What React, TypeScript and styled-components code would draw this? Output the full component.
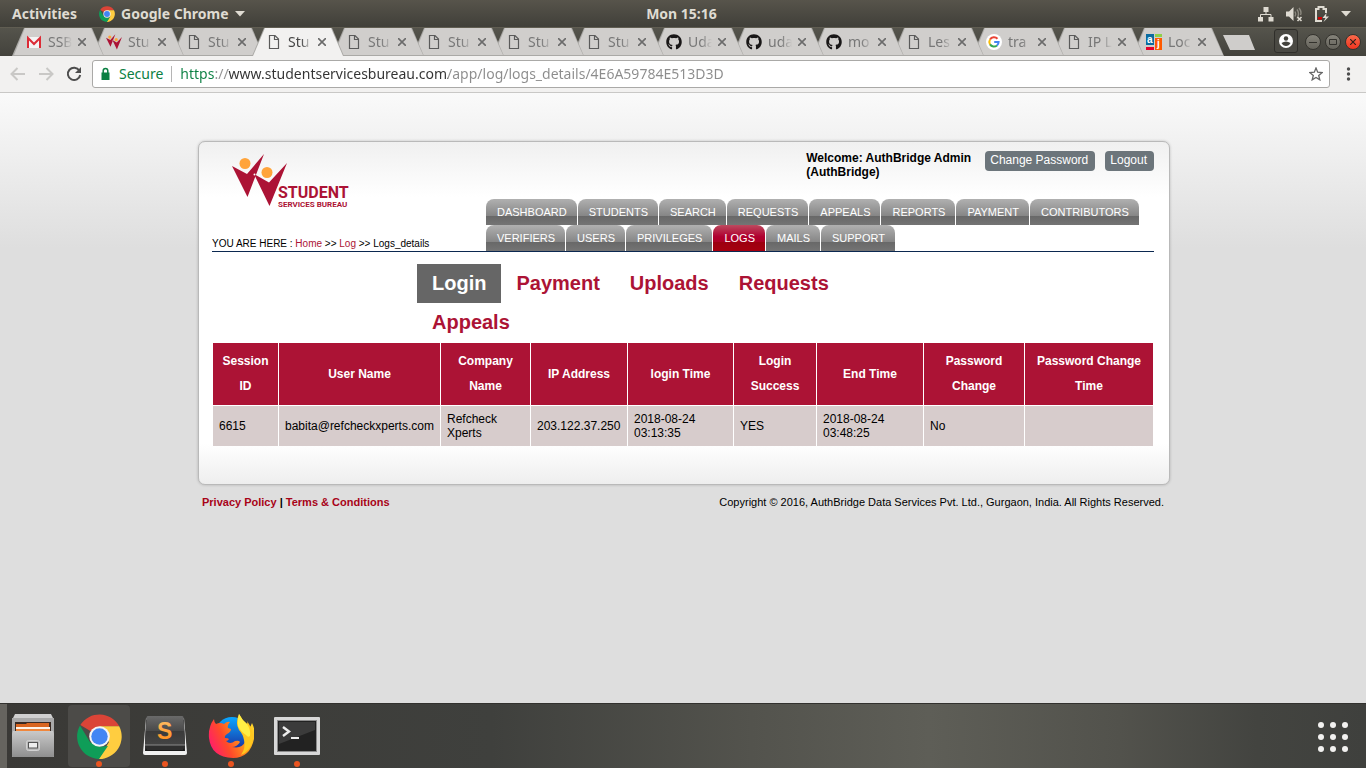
import React from "react";
import styled, { createGlobalStyle, css } from "styled-components";
import { FaGithub } from "react-icons/fa";

const UI = `"Noto Sans", "Open Sans", sans-serif`;
const WEB = `"Liberation Sans", Arial, sans-serif`;
const RED = "#ac1335";

const Global = createGlobalStyle`
  *, *::before, *::after { box-sizing: border-box; }
  html, body { margin: 0; padding: 0; }
  body { background: #dedede; font-family: ${WEB}; }
  button { font: inherit; border: 0; padding: 0; background: none; color: inherit; cursor: pointer; }
  ul { list-style: none; margin: 0; padding: 0; }
  a { color: inherit; text-decoration: none; }
  svg { display: block; flex: none; }
`;

const Desktop = styled.div`
  min-height: 100vh;
  display: flex;
  flex-direction: column;
`;

/* ---------- system bar ---------- */

const SystemBar = styled.header`
  display: grid;
  grid-template-columns: 1fr auto 1fr;
  align-items: center;
  height: 27px;
  padding: 0 15px 0 12px;
  background: linear-gradient(#57544b, #403f39);
  color: #dfdbd2;
  font: bold 14px/26px ${UI};
`;

const SystemGroup = styled.div<{ $end?: boolean }>`
  display: flex;
  align-items: center;
  gap: ${(p) => (p.$end ? 11 : 22)}px;
  justify-content: ${(p) => (p.$end ? "flex-end" : "flex-start")};
`;

const SystemButton = styled.button`
  display: flex;
  align-items: center;
  gap: 6px;
`;

/* ---------- tab strip ---------- */

const TabStrip = styled.nav`
  display: flex;
  align-items: flex-end;
  height: 29px;
  padding: 0 5px 0 12px;
  background: linear-gradient(#55544c, #43423c);
  border-top: 1px solid #605d52;
  overflow: hidden;
`;

const Tabs = styled.ul`
  display: flex;
  isolation: isolate;
`;

const Tab = styled.li<{ $active: boolean; $order: number }>`
  position: relative;
  display: flex;
  align-items: center;
  width: 92px;
  height: 28px;
  padding: 0 18px 0 14px;
  margin-right: -12px;
  z-index: ${(p) => (p.$active ? 50 : p.$order)};
  color: ${(p) => (p.$active ? "#454545" : "#777")};
  &::before,
  &::after {
    content: "";
    position: absolute;
    inset: 0;
    z-index: -1;
    background: #aaa9a6;
    clip-path: polygon(0 100%, 12px 0, 80px 0, 100% 100%);
  }
  &::after {
    background: ${(p) => (p.$active ? "#f2f1f0" : "#d0cecc")};
    clip-path: ${(p) =>
      p.$active
        ? "polygon(1px 100%, 13px 0, 79px 0, 91px 100%)"
        : "polygon(2px 27px, 13px 0, 79px 0, 91px 27px)"};
  }
`;

const TabIcon = styled.span`
  display: grid;
  place-items: center;
  flex: none;
  width: 16px;
`;

const TabLabel = styled.a`
  flex: none;
  width: 24px;
  margin-left: 6px;
  overflow: hidden;
  white-space: nowrap;
  font: 14px/28px ${UI};
  mask-image: linear-gradient(90deg, #000 55%, transparent);
`;

const TabClose = styled.button`
  margin-left: auto;
`;

const NewTab = styled.button`
  width: 32px;
  height: 15px;
  margin: 0 auto 6px 11px;
  background: #cfcdcb;
  clip-path: polygon(0 0, 26px 0, 100% 100%, 7px 100%);
`;

const UserButton = styled.button`
  display: grid;
  place-items: center;
  width: 24px;
  height: 24px;
  margin: 0 6px 3px 0;
  border: 1px solid #2f2e2a;
  border-radius: 3px;
  background: #4a4943;
`;

const WindowButtons = styled.div`
  display: flex;
  align-items: center;
  gap: 4px;
  padding: 0 0 6px 1px;
`;

const WindowButton = styled.button<{ $close?: boolean }>`
  display: grid;
  place-items: center;
  width: 16px;
  height: 16px;
  border-radius: 50%;
  border: 1px solid #35342f;
  background: ${(p) => (p.$close ? "linear-gradient(#f96a4b, #f0341f)" : "linear-gradient(#85837a, #65635b)")};
`;

/* ---------- toolbar ---------- */

const Toolbar = styled.div`
  display: flex;
  align-items: center;
  height: 37px;
  padding: 0 10px;
  background: #f2f1f0;
  border-bottom: 1px solid #c9c8c6;
`;

const NavButtons = styled.div`
  display: flex;
  gap: 12px;
  margin-right: 10px;
`;

const Omnibox = styled.form`
  flex: 1;
  display: flex;
  align-items: center;
  height: 28px;
  padding: 0 6px;
  border: 1px solid #aaa9a7;
  border-radius: 3px;
  background: #fff;
  font: 14px/26px ${UI};
`;

const Secure = styled.span`
  margin: 0 8px 0 7px;
  color: #0b8043;
`;

const Separator = styled.span`
  width: 1px;
  height: 16px;
  background: #b5b5b5;
`;

const Address = styled.input`
  flex: 1;
  min-width: 0;
  margin-left: 8px;
  padding: 0;
  border: 0;
  outline: 0;
  font: 14px/24px ${UI};
  color: transparent;
  background: linear-gradient(90deg, #0b8043 34px, #909090 34px 48px, #333 48px 268px, #8c8c8c 268px);
  background-clip: text;
  -webkit-background-clip: text;
`;

const MenuButton = styled.button`
  margin-left: 10px;
`;

/* ---------- web page ---------- */

const Page = styled.main`
  flex: 1;
  padding: 48px 16px 0;
  background: #dedede linear-gradient(#fafafa, #dedede) no-repeat;
  background-size: 100% 155px;
  color: #000;
`;

const Column = styled.div`
  max-width: 974px;
  margin: 0 auto;
  padding-left: 2px;
`;

const Card = styled.section`
  padding: 9px 15px 37px 13px;
  border: 1px solid #b9b9b9;
  border-radius: 7px;
  box-shadow: 0 0 3px rgba(0, 0, 0, 0.2);
  background:
    linear-gradient(#f0f0f0, #fff) top / 100% 55px no-repeat,
    linear-gradient(#fff, #eee) bottom / 100% 40px no-repeat,
    #fff;
`;

const Header = styled.div`
  display: flex;
  justify-content: space-between;
  border-bottom: 1px solid #0b2850;
`;

const Brand = styled.div`
  display: flex;
  flex-direction: column;
  justify-content: space-between;
`;

const LogoLink = styled.a`
  padding: 3px 0 0 20px;
`;

const Crumbs = styled.nav`
  font-size: 10px;
  line-height: 14px;
  a { color: ${RED}; }
`;

const HeaderSide = styled.div`
  width: 668px;
`;

const Account = styled.div`
  display: flex;
  justify-content: flex-end;
  align-items: flex-start;
  gap: 10px;
  margin-bottom: 20px;
`;

const Welcome = styled.p`
  width: 169px;
  margin: 0;
  font: bold 12px/14px ${WEB};
`;

const PillButton = styled.button`
  height: 20px;
  padding: 0 7px 2px 5px;
  border-radius: 4px;
  background: #6c757b;
  color: #fff;
  font: 12px/18px ${WEB};
  white-space: nowrap;
`;

const MainNav = styled.ul`
  display: flex;
  flex-wrap: wrap;
  padding-right: 12px;
`;

const MainNavItem = styled.li<{ $active?: boolean }>`
  height: 26px;
  padding: 0 10px 0 11px;
  margin-right: 1px;
  border-radius: 8px 8px 0 0;
  background: ${(p) =>
    p.$active
      ? "linear-gradient(#bd4a5f, #b00030 45%, #ad0022 66%, #9c0010 66%, #a6000f)"
      : "linear-gradient(#b0b0b0, #858585 66%, #686868 66%, #747474)"};
  color: #fff;
  font-size: 11px;
  line-height: 26px;
`;

const LogTabs = styled.ul`
  display: flex;
  flex-wrap: wrap;
  max-width: 532px;
  margin: 12px auto 0;
`;

const LogTab = styled.li<{ $active?: boolean }>`
  padding: 0 15px;
  font: bold 20px/39px ${WEB};
  color: ${RED};
  ${(p) => p.$active && css`background: #666; color: #fff;`}
`;

const LogTable = styled.table`
  table-layout: fixed;
  width: 100%;
  border-spacing: 1px;
  font-size: 12px;
  th {
    padding: 6px;
    background: ${RED};
    color: #fff;
    line-height: 25px;
  }
  td {
    height: 40px;
    padding: 6px;
    background: #d7cccc;
    line-height: 14px;
  }
`;

const Footer = styled.footer`
  display: flex;
  justify-content: space-between;
  padding: 10px 6px 10px 4px;
  font-size: 11px;
  line-height: 14px;
`;

const Legal = styled.nav`
  font-weight: bold;
  a { color: #a80318; }
`;

/* ---------- dock ---------- */

const Dock = styled.footer`
  display: flex;
  justify-content: space-between;
  height: 65px;
  padding: 1px 16px 0 2px;
  background: linear-gradient(90deg, #66645f 0 7px, transparent 7px),
    linear-gradient(90deg, #3a3936, #3f403d 36%, #53534d 55%, #5e5e57 68%, #52524c 82%, #434440 92%, #3f403d);
  border-top: 1px solid #32312e;
`;

const DockApps = styled.ul`
  display: flex;
  gap: 4px;
`;

const DockApp = styled.li<{ $focused: boolean; $running: boolean }>`
  position: relative;
  width: 62px;
  height: 62px;
  border-radius: 4px;
  background: ${(p) => (p.$focused ? "#4c4b48" : "none")};
  button { display: grid; place-items: center; width: 100%; height: 62px; }
  ${(p) =>
    p.$running &&
    css`
      &::after {
        content: "";
        position: absolute;
        left: 28px;
        bottom: 0;
        width: 6px;
        height: 6px;
        border-radius: 50%;
        background: #e95420;
      }
    `}
`;

const AppGrid = styled.button`
  align-self: center;
`;

/* ---------- drawings ---------- */

const ChromeLogo = ({ size }: { size: number }) => (
  <svg width={size} height={size} viewBox="0 0 48 48">
    <path d="M24 24 3.6 11.8A24 24 0 0 1 45 13H24z" fill="#db4437" />
    <path d="M24 13h21a24 24 0 0 1-22 35l11-18z" fill="#ffcd40" />
    <path d="M3.2 12.200 14 30l10 5 9-1-9.500 14A24 24 0 0 1 3.200 12.200z" fill="#0f9d58" />
    <circle cx="24" cy="24" r="11" fill="#f4f4f4" />
    <circle cx="24" cy="24" r="8.800" fill="#4285f4" />
  </svg>
);

const PageIcon = () => (
  <svg width="14" height="16" viewBox="0 0 14 16" fill="none" stroke="#5a5a5a" strokeWidth="1.200">
    <path d="M2.500 1.500h5.500l3.500 3.500v9.500h-9zM7.500 1.500v4h4" />
  </svg>
);

const GmailIcon = () => (
  <svg width="16" height="16" viewBox="0 0 16 16">
    <path d="M1 3h14v11H1z" fill="#f4f4f4" />
    <path d="M2 14V4l6 6 6-6v10" fill="none" stroke="#dc2b36" strokeWidth="2" />
  </svg>
);

const People = () => (
  <>
    <path d="M0 12 15 20 32 0 15.500 43z" fill={RED} />
    <path d="M22 20 37 28.500 55 9 37.500 52z" fill={RED} />
    <circle cx="22.500" cy="20.500" r="1" fill="#fff" />
    <circle cx="13" cy="9.500" r="5.500" fill="#ffa43b" />
    <circle cx="35" cy="18.500" r="5.500" fill="#ffa43b" />
  </>
);

const BureauIcon = () => (
  <svg width="16" height="16" viewBox="0 0 55 53"><People /></svg>
);

const GithubIcon = () => <FaGithub size={16} color="#191717" />;

const GoogleIcon = () => (
  <svg width="16" height="16" viewBox="0 0 16 16" fill="none" strokeWidth="2">
    <circle cx="8" cy="8" r="8" fill="#fff" />
    <path d="M11.500 4.800A4.700 4.700 0 0 0 4 5.600" stroke="#ea4335" />
    <path d="M4 5.600a4.700 4.700 0 0 0 0 4.800" stroke="#fbbc05" />
    <path d="M4 10.400a4.700 4.700 0 0 0 7 1" stroke="#34a853" />
    <path d="M11 11.400A4.500 4.500 0 0 0 12.600 8H8.200" stroke="#4285f4" />
  </svg>
);

const AjIcon = () => (
  <svg width="16" height="16" viewBox="0 0 16 16" fontFamily="Liberation Sans" fontWeight="bold">
    <path d="M0 0h8v11H0z" fill="#0a6ba0" />
    <path d="M9 0h7v3H9z" fill="#8ed04b" />
    <path d="M9 4h7v12H9z" fill="#ff5a00" />
    <path d="M0 13h8v3H0z" fill="#e4002b" />
    <text x="1" y="9" fontSize="10" fill="#fff">a</text>
    <text x="11" y="13" fontSize="10" fill="#fff">j</text>
  </svg>
);

const BureauLogo = () => (
  <svg width="120" height="56" viewBox="0 0 120 56" fill={RED} fontFamily="Roboto, Liberation Sans" fontWeight="bold">
    <People />
    <text x="46" y="44" fontSize="16">STUDENT</text>
    <text x="46" y="53" fontSize="8">SERVICES BUREAU</text>
  </svg>
);

const Caret = () => (
  <svg width="10" height="6" viewBox="0 0 10 6"><path d="M0 0h10L5 5.500z" fill="#dfdbd2" /></svg>
);

const NetworkIcon = () => (
  <svg width="16" height="16" viewBox="0 0 16 16" fill="#dfdbd2">
    <path d="M5.500 1h5v5h-5zM0 11h5v4.500H0zM10.500 11h5v4.500h-5z" />
    <path d="M8 6v2.500M2.500 11V8.500h10.500V11" fill="none" stroke="#dfdbd2" />
  </svg>
);

const VolumeIcon = () => (
  <svg width="18" height="16" viewBox="0 0 18 16" fill="#dfdbd2">
    <path d="M1 5.500h3L8.500 1v14L4 10.500H1z" />
    <path d="M10 5.500q1.500 2.500 0 5M12 3.500q3 4 0 9M14 2q3 4 1.500 7" fill="none" stroke="#8d8a80" strokeWidth="1.400" />
    <path d="m12.500 11 4 4m0-4-4 4" stroke="#dfdbd2" strokeWidth="1.600" />
  </svg>
);

const BatteryIcon = () => (
  <svg width="16" height="18" viewBox="0 0 16 18">
    <path d="M8 16H2V4h2.500V2h5v2H12v4" fill="none" stroke="#dfdbd2" strokeWidth="2" />
    <path d="M4 12h4v2.500H4z" fill="#d40000" />
    <path d="m12.500 8-4 5h3L9.500 17l5.500-5.500h-3z" fill="#dfdbd2" />
  </svg>
);

const CrossIcon = () => (
  <svg width="8" height="8" viewBox="0 0 8 8"><path d="m0 0 8 8M8 0 0 8" stroke="#6b6b6b" strokeWidth="1.600" /></svg>
);

const BackIcon = ({ flip }: { flip?: boolean }) => (
  <svg width="16" height="16" viewBox="0 0 16 16" fill="none" stroke="#c9c8c6" strokeWidth="2">
    <path d={flip ? "M1 8h13M8.500 2l6 6-6 6" : "M15 8H2M7.500 2l-6 6 6 6"} />
  </svg>
);

const ReloadIcon = () => (
  <svg width="16" height="16" viewBox="0 0 16 16">
    <path d="M13.300 4.500A6.200 6.200 0 1 0 14.200 9" fill="none" stroke="#4d4d4d" strokeWidth="2" />
    <path d="M15 1v6H9z" fill="#4d4d4d" />
  </svg>
);

const LockIcon = () => (
  <svg width="13" height="14" viewBox="0 0 13 14">
    <path d="M2.500 5.500h8V13h-8z" fill="#0b8043" />
    <path d="M4.200 6V3.800a2.300 2.300 0 0 1 4.600 0V6" fill="none" stroke="#0b8043" strokeWidth="1.500" />
  </svg>
);

const StarIcon = () => (
  <svg width="14" height="14" viewBox="0 0 14 14">
    <path d="m7 1 1.700 4.200 4.500.3-3.500 2.900 1.100 4.400L7 10.400l-3.800 2.400 1.100-4.400L.8 5.500l4.500-.3z" fill="none" stroke="#666" strokeWidth="1.300" />
  </svg>
);

const DotsIcon = () => (
  <svg width="16" height="16" viewBox="0 0 16 16" fill="#4d4d4d">
    <circle cx="8.500" cy="3" r="1.700" /><circle cx="8.500" cy="8" r="1.700" /><circle cx="8.500" cy="13" r="1.700" />
  </svg>
);

const FilesLogo = () => (
  <svg width="44" height="46" viewBox="0 0 44 46">
    <defs>
      <linearGradient id="files" x2="0" y2="1"><stop stopColor="#c9c9c9" /><stop offset="1" stopColor="#8f8f8f" /></linearGradient>
    </defs>
    <path d="M4 1h36l2 4v39H2V5z" fill="#d0d0d0" />
    <path d="M1 5h42v39H1z" fill="#a9a9a9" />
    <path d="M4 9h36v10H4z" fill="#3a2a22" />
    <path d="M5 11h10l1-1h22v9H5z" fill="#d9651f" />
    <path d="M5 14h34v2H5z" fill="#fff3e8" />
    <path d="M5 16h34v3H5z" fill="#f0873c" />
    <path d="M2 18h40l1 3v22q0 1-1 1H2q-1 0-1-1V21z" fill="url(#files)" />
    <rect x="15.500" y="27.500" width="13" height="10" rx="2" fill="#b9b9b9" stroke="#d2d2d2" />
    <rect x="17.500" y="29.500" width="9" height="5.500" fill="#eee" stroke="#555" />
  </svg>
);

const SublimeLogo = () => (
  <svg width="46" height="42" viewBox="0 0 46 42">
    <defs>
      <linearGradient id="key" x2="0" y2="1"><stop stopColor="#6a6a6a" /><stop offset=".5" stopColor="#4a4a4a" /><stop offset=".52" stopColor="#3a3a3a" /><stop offset="1" stopColor="#444" /></linearGradient>
      <linearGradient id="letter" x2="0" y2="1"><stop stopColor="#ffc06a" /><stop offset="1" stopColor="#ff8a14" /></linearGradient>
    </defs>
    <path d="M4 3h38l3 35q0 2-2 2H3q-2 0-2-2z" fill="#f0f0f0" />
    <path d="M4 5h38l1 31H3z" fill="#191919" />
    <path d="M6 1h34q1 0 1.500 1L43 31l-2 4H5l-2-4L4.500 2Q5 1 6 1z" fill="#2f2f2f" />
    <path d="M6 1h34q1 0 1.500 1L43 30H3L4.500 2Q5 1 6 1z" fill="url(#key)" />
    <path d="M3 30h40" stroke="#8a8a8a" />
    <text x="15" y="24" fontSize="23" fontWeight="bold" fontFamily="Liberation Sans" fill="url(#letter)">S</text>
  </svg>
);

const FirefoxLogo = () => (
  <svg width="46" height="46" viewBox="0 0 46 46">
    <defs>
      <linearGradient id="fox" x1="0" y1=".7" x2="1" y2=".3"><stop stopColor="#ff1a70" /><stop offset=".35" stopColor="#ff4a2a" /><stop offset=".7" stopColor="#ff9a1a" /><stop offset="1" stopColor="#ffd42a" /></linearGradient>
      <linearGradient id="globe" x2="0" y2="1"><stop stopColor="#0aa7ff" /><stop offset="1" stopColor="#1b2a9c" /></linearGradient>
    </defs>
    <circle cx="24" cy="21" r="17" fill="url(#globe)" />
    <path d="M6 6q0 3 2 5 4-2 8 0 3-3 6-2-3 3-2 6l3 1q0 3-4 5-3 2-2 4 3 0 4 1-1 2-3 2 4 4 9 0 4-1 5 1-3 5-8 5 10 2 13-5 3-7-1-13 5 2 8-6 4 8 2 16-4 19-21 19Q3 44 1 25 0 14 6 6z" fill="url(#fox)" />
    <path d="M31 1q3 6 8 10 1-1 0-3 6 8 6 18-2 12-12 16 5-7 3-15-1-6-5-10-4-7 0-16z" fill="#ffc81f" />
    <path d="M31 1q3 6 8 10 4 6 3 12-2 2-4-1-6-4-8-9-1-6 1-12z" fill="#ffee45" />
  </svg>
);

const TerminalLogo = () => (
  <svg width="46" height="38" viewBox="0 0 46 38">
    <rect width="46" height="38" rx="1" fill="#d8d8d8" />
    <rect x="3" y="3" width="40" height="32" fill="#8c8c8c" />
    <rect x="4" y="4" width="38" height="30" fill="#222" />
    <path d="M5 5h36v8L5 27z" fill="#3b3b3b" />
    <path d="m9 10 6 4.500L9 19" fill="none" stroke="#eee" strokeWidth="2.400" />
    <path d="M17 21h8" stroke="#eee" strokeWidth="2" />
  </svg>
);

/* ---------- data ---------- */

const tabs = [
  { label: "SSB", icon: GmailIcon },
  { label: "Stu", icon: BureauIcon },
  { label: "Stu", icon: PageIcon },
  { label: "Stu", icon: PageIcon, active: true },
  { label: "Stu", icon: PageIcon },
  { label: "Stu", icon: PageIcon },
  { label: "Stu", icon: PageIcon },
  { label: "Stu", icon: PageIcon },
  { label: "Uda", icon: GithubIcon },
  { label: "uda", icon: GithubIcon },
  { label: "mo", icon: GithubIcon },
  { label: "Les", icon: PageIcon },
  { label: "tra", icon: GoogleIcon },
  { label: "IP L", icon: PageIcon },
  { label: "Loc", icon: AjIcon },
];

const navItems = [
  "DASHBOARD", "STUDENTS", "SEARCH", "REQUESTS", "APPEALS", "REPORTS", "PAYMENT", "CONTRIBUTORS",
  "VERIFIERS", "USERS", "PRIVILEGES", "LOGS", "MAILS", "SUPPORT",
];

const logTabs = ["Login", "Payment", "Uploads", "Requests", "Appeals"];

const columns: { title: string; width?: number }[] = [
  { title: "Session ID", width: 65 },
  { title: "User Name", width: 161 },
  { title: "Company Name", width: 89 },
  { title: "IP Address", width: 96 },
  { title: "login Time", width: 105 },
  { title: "Login Success", width: 82 },
  { title: "End Time", width: 106 },
  { title: "Password Change", width: 100 },
  { title: "Password Change Time" },
];

const rows = [
  ["6615", "babita@refcheckxperts.com", "Refcheck Xperts", "203.122.37.250", "2018-08-24 03:13:35", "YES", "2018-08-24 03:48:25", "No", ""],
];

const apps = [
  { name: "Files", logo: <FilesLogo />, running: false, focused: false },
  { name: "Google Chrome", logo: <ChromeLogo size={45} />, running: true, focused: true },
  { name: "Sublime Text", logo: <SublimeLogo />, running: true, focused: false },
  { name: "Firefox", logo: <FirefoxLogo />, running: true, focused: false },
  { name: "Terminal", logo: <TerminalLogo />, running: true, focused: false },
];

export default function App() {
  return (
    <Desktop>
      <Global />
      <SystemBar>
        <SystemGroup>
          <SystemButton>Activities</SystemButton>
          <SystemButton><ChromeLogo size={16} />Google Chrome<Caret /></SystemButton>
        </SystemGroup>
        <SystemButton>Mon 15:16</SystemButton>
        <SystemGroup $end>
          <NetworkIcon /><VolumeIcon /><BatteryIcon /><Caret />
        </SystemGroup>
      </SystemBar>

      <TabStrip>
        <Tabs>
          {tabs.map(({ label, icon: Icon, active }, i) => (
            <Tab key={i} $active={!!active} $order={20 - i}>
              <TabIcon><Icon /></TabIcon>
              <TabLabel href="#">{label}</TabLabel>
              <TabClose aria-label="Close tab"><CrossIcon /></TabClose>
            </Tab>
          ))}
        </Tabs>
        <NewTab aria-label="New tab" />
        <UserButton aria-label="Profile">
          <svg width="14" height="14" viewBox="0 0 14 14">
            <circle cx="7" cy="7" r="7" fill="#fff" />
            <circle cx="7" cy="4.500" r="2.200" fill="#43423c" />
            <path d="M2.500 9q4.500-3 9 0-1.500 3-4.500 3t-4.500-3z" fill="#43423c" />
          </svg>
        </UserButton>
        <WindowButtons>
          <WindowButton aria-label="Minimize">
            <svg width="8" height="8" viewBox="0 0 8 8"><path d="M0 4.500h8" stroke="#33322d" /></svg>
          </WindowButton>
          <WindowButton aria-label="Restore">
            <svg width="8" height="8" viewBox="0 0 8 8"><path d="M.5 1.500h7v5h-7z" fill="none" stroke="#33322d" /></svg>
          </WindowButton>
          <WindowButton $close aria-label="Close">
            <svg width="6" height="6" viewBox="0 0 6 6"><path d="m0 0 6 6M6 0 0 6" stroke="#33201c" strokeWidth="1.200" /></svg>
          </WindowButton>
        </WindowButtons>
      </TabStrip>

      <Toolbar>
        <NavButtons>
          <button aria-label="Back"><BackIcon /></button>
          <button aria-label="Forward"><BackIcon flip /></button>
          <button aria-label="Reload"><ReloadIcon /></button>
        </NavButtons>
        <Omnibox>
          <LockIcon />
          <Secure>Secure</Secure>
          <Separator />
          <Address
            aria-label="Address"
            defaultValue="https://www.studentservicesbureau.com/app/log/logs_details/4E6A59784E513D3D"
          />
          <button type="button" aria-label="Bookmark this page"><StarIcon /></button>
        </Omnibox>
        <MenuButton aria-label="Menu"><DotsIcon /></MenuButton>
      </Toolbar>

      <Page>
        <Column>
          <Card>
            <Header>
              <Brand>
                <LogoLink href="#" aria-label="Student Services Bureau"><BureauLogo /></LogoLink>
                <Crumbs>
                  YOU ARE HERE : <a href="#">Home</a> &gt;&gt; <a href="#">Log</a> &gt;&gt; Logs_details
                </Crumbs>
              </Brand>
              <HeaderSide>
                <Account>
                  <Welcome>Welcome: AuthBridge Admin (AuthBridge)</Welcome>
                  <PillButton>Change Password</PillButton>
                  <PillButton>Logout</PillButton>
                </Account>
                <MainNav>
                  {navItems.map((item) => (
                    <MainNavItem key={item} $active={item === "LOGS"}><a href="#">{item}</a></MainNavItem>
                  ))}
                </MainNav>
              </HeaderSide>
            </Header>
            <LogTabs>
              {logTabs.map((item) => (
                <LogTab key={item} $active={item === "Login"}><a href="#">{item}</a></LogTab>
              ))}
            </LogTabs>
            <LogTable>
              <colgroup>
                {columns.map((c) => <col key={c.title} width={c.width} />)}
              </colgroup>
              <thead>
                <tr>{columns.map((c) => <th key={c.title} scope="col">{c.title}</th>)}</tr>
              </thead>
              <tbody>
                {rows.map((row) => (
                  <tr key={row[0]}>{row.map((cell, i) => <td key={i}>{cell}</td>)}</tr>
                ))}
              </tbody>
            </LogTable>
          </Card>
          <Footer>
            <Legal><a href="#">Privacy Policy</a> | <a href="#">Terms &amp; Conditions</a></Legal>
            <span>Copyright © 2016, AuthBridge Data Services Pvt. Ltd., Gurgaon, India. All Rights Reserved.</span>
          </Footer>
        </Column>
      </Page>

      <Dock>
        <DockApps>
          {apps.map((app) => (
            <DockApp key={app.name} $focused={app.focused} $running={app.running}>
              <button aria-label={app.name}>{app.logo}</button>
            </DockApp>
          ))}
        </DockApps>
        <AppGrid aria-label="Show applications">
          <svg width="34" height="34" viewBox="0 0 34 34" fill="#f2f1f0">
            {[5, 17, 29].map((y) => [5, 17, 29].map((x) => <circle key={`${x}-${y}`} cx={x} cy={y} r="3" />))}
          </svg>
        </AppGrid>
      </Dock>
    </Desktop>
  );
}
